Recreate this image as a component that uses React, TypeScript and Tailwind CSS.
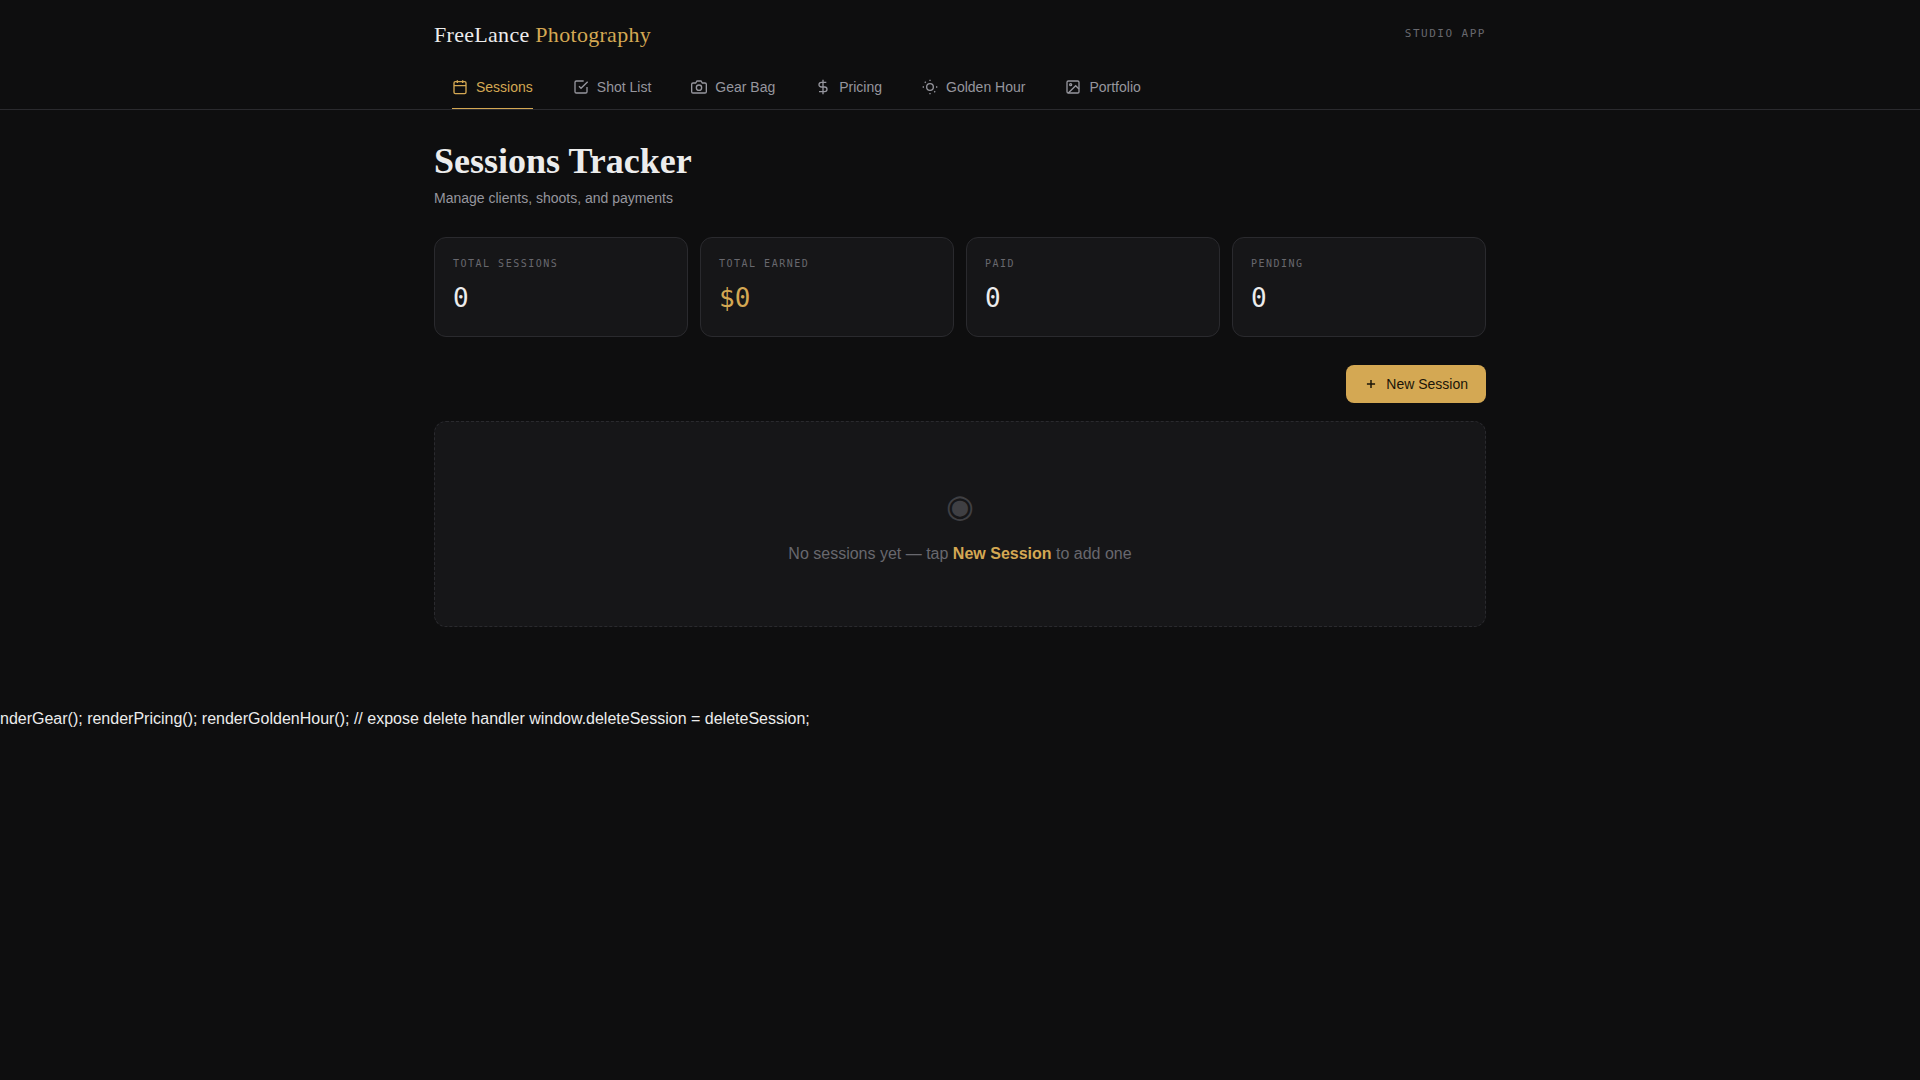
import { useState, type ReactNode } from "react";

function Glyph({ children, size = 16, weight = 2 }: { children: ReactNode; size?: number; weight?: number }) {
  return (
    <svg
      width={size}
      height={size}
      viewBox="0 0 24 24"
      fill="none"
      stroke="currentColor"
      strokeWidth={weight}
      className="shrink-0"
      aria-hidden="true"
    >
      {children}
    </svg>
  );
}

const tabs = [
  {
    name: "Sessions",
    drawing: (
      <>
        <rect x="3" y="4" width="18" height="18" rx="2" />
        <path d="M16 2v4M8 2v4M3 10h18" />
      </>
    ),
  },
  {
    name: "Shot List",
    drawing: (
      <>
        <path d="M9 11l3 3L22 4" />
        <path d="M21 12v7a2 2 0 0 1-2 2H5a2 2 0 0 1-2-2V5a2 2 0 0 1 2-2h11" />
      </>
    ),
  },
  {
    name: "Gear Bag",
    drawing: (
      <>
        <path d="M23 19a2 2 0 0 1-2 2H3a2 2 0 0 1-2-2V8a2 2 0 0 1 2-2h4l2-3h6l2 3h4a2 2 0 0 1 2 2z" />
        <circle cx="12" cy="13" r="4" />
      </>
    ),
  },
  {
    name: "Pricing",
    drawing: <path d="M12 1v22M17 5H9.5a3.5 3.5 0 0 0 0 7h5a3.5 3.5 0 0 1 0 7H6" />,
  },
  {
    name: "Golden Hour",
    drawing: (
      <>
        <circle cx="12" cy="12" r="5" />
        <path d="M12 1v2M12 21v2M4.22 4.22l1.42 1.42M18.36 18.36l1.42 1.42M1 12h2M21 12h2" />
      </>
    ),
  },
  {
    name: "Portfolio",
    drawing: (
      <>
        <rect x="3" y="3" width="18" height="18" rx="2" />
        <circle cx="8.5" cy="8.5" r="1.5" />
        <path d="M21 15l-5-5L5 21" />
      </>
    ),
  },
];

const stats = [
  { label: "Total Sessions", value: "0", color: "text-[#ececec]" },
  { label: "Total Earned", value: "$0", color: "text-[#d4a853]" },
  { label: "Paid", value: "0", color: "text-[#ececec]" },
  { label: "Pending", value: "0", color: "text-[#ececec]" },
];

function Header() {
  const [active, setActive] = useState("Sessions");
  return (
    <header className="border-b border-[#2a2a2e]">
      <div className="mx-auto max-w-[1100px] px-6 pt-5">
        <div className="flex items-center justify-between pb-[15px]">
          <div className="font-['Liberation_Serif',serif] text-[22px] leading-[30px] tracking-[0.3px]">
            FreeLance <span className="text-[#d4a853]">Photography</span>
          </div>
          <span className="pb-0.5 font-['DejaVu_Sans_Mono',monospace] text-[11px] leading-4 tracking-[1.5px] text-[#68686e] uppercase">
            Studio App
          </span>
        </div>
        <nav className="flex gap-1">
          {tabs.map(({ name, drawing }) => (
            <button
              key={name}
              type="button"
              onClick={() => setActive(name)}
              className={
                name === active
                  ? "relative flex h-11 cursor-pointer items-center gap-2 px-[18px] text-sm text-[#d4a853] after:absolute after:inset-x-[18px] after:bottom-0 after:h-px after:bg-[#d4a853]"
                  : "relative flex h-11 cursor-pointer items-center gap-2 px-[18px] text-sm text-[#96969e]"
              }
            >
              <Glyph>{drawing}</Glyph>
              {name}
            </button>
          ))}
        </nav>
      </div>
    </header>
  );
}

export default function App() {
  return (
    <div className="min-h-screen bg-[#0e0e0f] font-['Liberation_Sans',sans-serif] text-base text-[#ececec]">
      <Header />
      <main className="mx-auto max-w-[1100px] px-6 pt-[29px] pb-20">
        <h1 className="font-['Liberation_Serif',serif] text-4xl leading-11 font-bold">Sessions Tracker</h1>
        <p className="mt-1 text-sm leading-[22px] text-[#96969e]">Manage clients, shoots, and payments</p>

        <div className="mt-7 grid grid-cols-4 gap-3">
          {stats.map((s) => (
            <div key={s.label} className="rounded-xl border border-[#2a2a2e] bg-[#161618] p-[18px]">
              <div className="font-['DejaVu_Sans_Mono',monospace] text-[10px] leading-4 tracking-[1.5px] text-[#68686e] uppercase">
                {s.label}
              </div>
              <div className={`mt-1.5 font-['DejaVu_Sans_Mono',monospace] text-[26px] leading-10 ${s.color}`}>
                {s.value}
              </div>
            </div>
          ))}
        </div>

        <div className="mt-7 flex justify-end">
          <button
            type="button"
            className="flex h-[38px] cursor-pointer items-center gap-2 rounded-lg bg-[#d4a853] px-[18px] text-sm text-[#1a1508]"
          >
            <Glyph size={14} weight={2.5}>
              <path d="M12 5v14M5 12h14" />
            </Glyph>
            New Session
          </button>
        </div>

        <section className="mt-[18px] rounded-xl border border-dashed border-[#2a2a2e] bg-[#161618] px-6 py-15 text-center text-[#68686e]">
          <div className="text-[32px] leading-12 opacity-50">◉</div>
          <p className="mt-3 leading-6">
            No sessions yet — tap <strong className="font-bold text-[#d4a853]">New Session</strong> to add one
          </p>
        </section>
      </main>
      <p className="leading-6 whitespace-nowrap">
        {"nderGear(); renderPricing(); renderGoldenHour(); // expose delete handler window.deleteSession = deleteSession;"}
      </p>
    </div>
  );
}
